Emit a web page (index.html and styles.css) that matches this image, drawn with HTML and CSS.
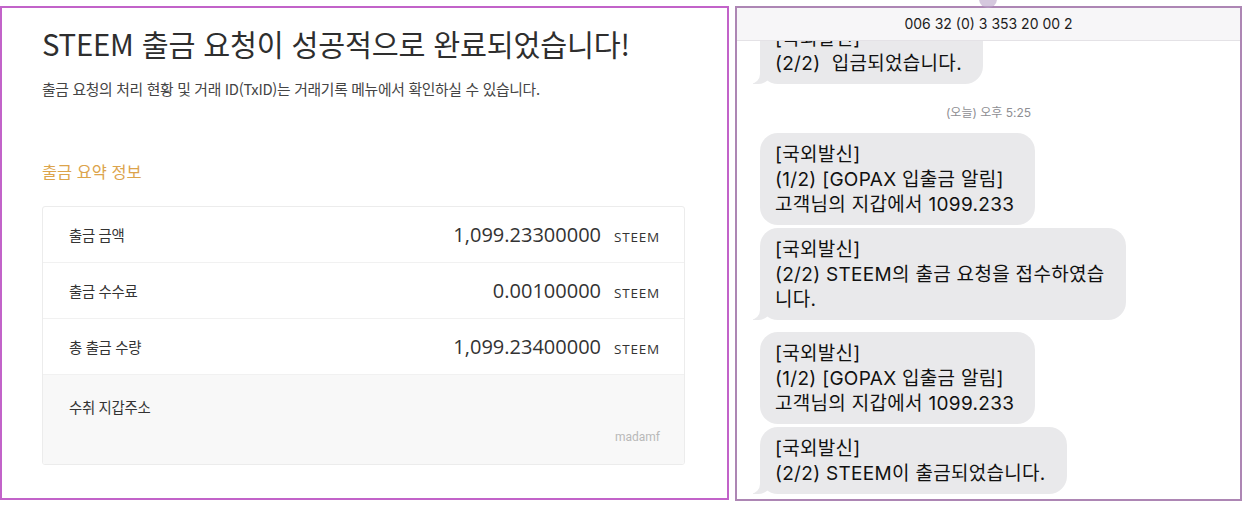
FILE: index.html
```html
<!DOCTYPE html>
<html lang="ko">
<head>
<meta charset="utf-8">
<title>STEEM 출금</title>
<link rel="stylesheet" href="styles.css">
</head>
<body>
<div class="wrap">
  <section class="receipt">
    <h1 class="title">STEEM 출금 요청이 성공적으로 완료되었습니다!</h1>
    <p class="desc">출금 요청의 처리 현황 및 거래 ID(TxID)는 거래기록 메뉴에서 확인하실 수 있습니다.</p>
    <h2 class="sec">출금 요약 정보</h2>
    <div class="table">
      <div class="row">
        <span class="label">출금 금액</span>
        <span class="val"><span class="num">1,099.23300000</span><span class="unit">STEEM</span></span>
      </div>
      <div class="row">
        <span class="label">출금 수수료</span>
        <span class="val"><span class="num">0.00100000</span><span class="unit">STEEM</span></span>
      </div>
      <div class="row">
        <span class="label">총 출금 수량</span>
        <span class="val"><span class="num">1,099.23400000</span><span class="unit">STEEM</span></span>
      </div>
      <div class="row addr">
        <span class="label">수취 지갑주소</span>
        <span class="addr-val">madamf</span>
      </div>
    </div>
  </section>
  <section class="phone">
    <div class="phone-head"><span class="avatar"></span>006 32 (0) 3 353 20 00 2</div>
    <div class="thread">
      <div class="msg tail first">[국외발신]<br>(2/2)&nbsp; 입금되었습니다.</div>
      <div class="time">(오늘) 오후 5:25</div>
      <div class="msg">[국외발신]<br>(1/2) [GOPAX 입출금 알림]<br>고객님의 지갑에서 1099.233</div>
      <div class="msg tail">[국외발신]<br>(2/2) STEEM의 출금 요청을 접수하였습<br>니다.</div>
      <div class="msg group">[국외발신]<br>(1/2) [GOPAX 입출금 알림]<br>고객님의 지갑에서 1099.233</div>
      <div class="msg tail">[국외발신]<br>(2/2) STEEM이 출금되었습니다.</div>
    </div>
  </section>
</div>
</body>
</html>
```
FILE: styles.css
```css
html, body {
  margin: 0;
  padding: 0;
  background: #ffffff;
}

.wrap {
  display: flex;
  align-items: flex-start;
  gap: 6px;
  padding-top: 6px;
}

/* ---------- left: receipt ---------- */
.receipt {
  width: 729px;
  height: 494px;
  box-sizing: border-box;
  border: 2px solid #c263c9;
  padding: 15px 42px 0 40px;
  font-family: "Noto Sans CJK KR", "Noto Sans", sans-serif;
  color: #333;
}

.title {
  margin: 0;
  font-size: 29.3px;
  font-weight: 400;
  line-height: 40px;
  color: #2e2e2e;
  letter-spacing: -0.2px;
}

.desc {
  margin: 16px 0 0;
  font-size: 14.8px;
  line-height: 20px;
  color: #444;
  letter-spacing: -0.3px;
}

.sec {
  margin: 60px 0 0;
  font-size: 16.4px;
  font-weight: 400;
  line-height: 24px;
  color: #dca44c;
}

.table {
  margin-top: 23px;
  border: 1px solid #ececec;
  border-radius: 3px;
  overflow: hidden;
}

.row {
  height: 56px;
  box-sizing: border-box;
  display: flex;
  align-items: center;
  justify-content: space-between;
  padding: 0 24px 0 26px;
  border-bottom: 1px solid #f1f1f1;
}

.label {
  font-size: 14.4px;
  line-height: 20px;
  color: #333;
  letter-spacing: -0.3px;
}

.val {
  display: flex;
  align-items: baseline;
  gap: 13px;
}

.num {
  font-family: "Open Sans", sans-serif;
  font-size: 20px;
  color: #333;
}

.unit {
  font-family: "Open Sans", sans-serif;
  font-size: 13.5px;
  color: #333;
  letter-spacing: 0.8px;
}

.row.addr {
  height: 89px;
  border-bottom: none;
  background: #f8f8f8;
  flex-direction: column;
  align-items: stretch;
  justify-content: flex-start;
  padding-top: 22px;
  gap: 12px;
}

.addr-val {
  align-self: flex-end;
  font-family: "Roboto", sans-serif;
  font-size: 12px;
  line-height: 16px;
  color: #b8b8b8;
}

/* ---------- right: phone ---------- */
.phone {
  width: 507px;
  height: 495px;
  box-sizing: border-box;
  border: 2px solid #ad86b4;
  display: flex;
  flex-direction: column;
  font-family: "Inter", "Noto Sans CJK KR", sans-serif;
  background: #fff;
}

.phone-head {
  position: relative;
  height: 33px;
  flex: none;
  box-sizing: border-box;
  background: #f7f6f8;
  border-bottom: 1px solid #e4e2e6;
  display: flex;
  align-items: center;
  justify-content: center;
  font-size: 14px;
  color: #1c1c1c;
  padding-bottom: 2px;
}

.avatar {
  position: absolute;
  top: -10px;
  left: 50%;
  width: 18px;
  height: 10px;
  margin-left: -10px;
  border-radius: 0 0 9px 9px;
  background: #b9a4c8;
  opacity: 0.6;
}

.thread {
  flex: 1;
  overflow: hidden;
  display: flex;
  flex-direction: column;
  align-items: flex-start;
  padding: 0 0 0 23px;
}

.msg {
  position: relative;
  background: #e9e9eb;
  color: #111;
  font-size: 19px;
  letter-spacing: 0.3px;
  line-height: 25px;
  padding: 9px 21px 8px 15px;
  border-radius: 18px;
  margin-top: 3px;
}

.msg.first {
  margin-top: -24px;
}

.msg.group {
  margin-top: 12px;
}

.tail::before {
  content: "";
  position: absolute;
  bottom: 0;
  left: -7px;
  width: 20px;
  height: 20px;
  background: #e9e9eb;
  border-bottom-right-radius: 15px;
}

.tail::after {
  content: "";
  position: absolute;
  bottom: 0;
  left: -10px;
  width: 10px;
  height: 20px;
  background: #fff;
  border-bottom-right-radius: 10px;
}

.time {
  align-self: center;
  margin: 21px 0 9px -23px;
  font-size: 12px;
  line-height: 16px;
  color: #8e8e93;
}
```
